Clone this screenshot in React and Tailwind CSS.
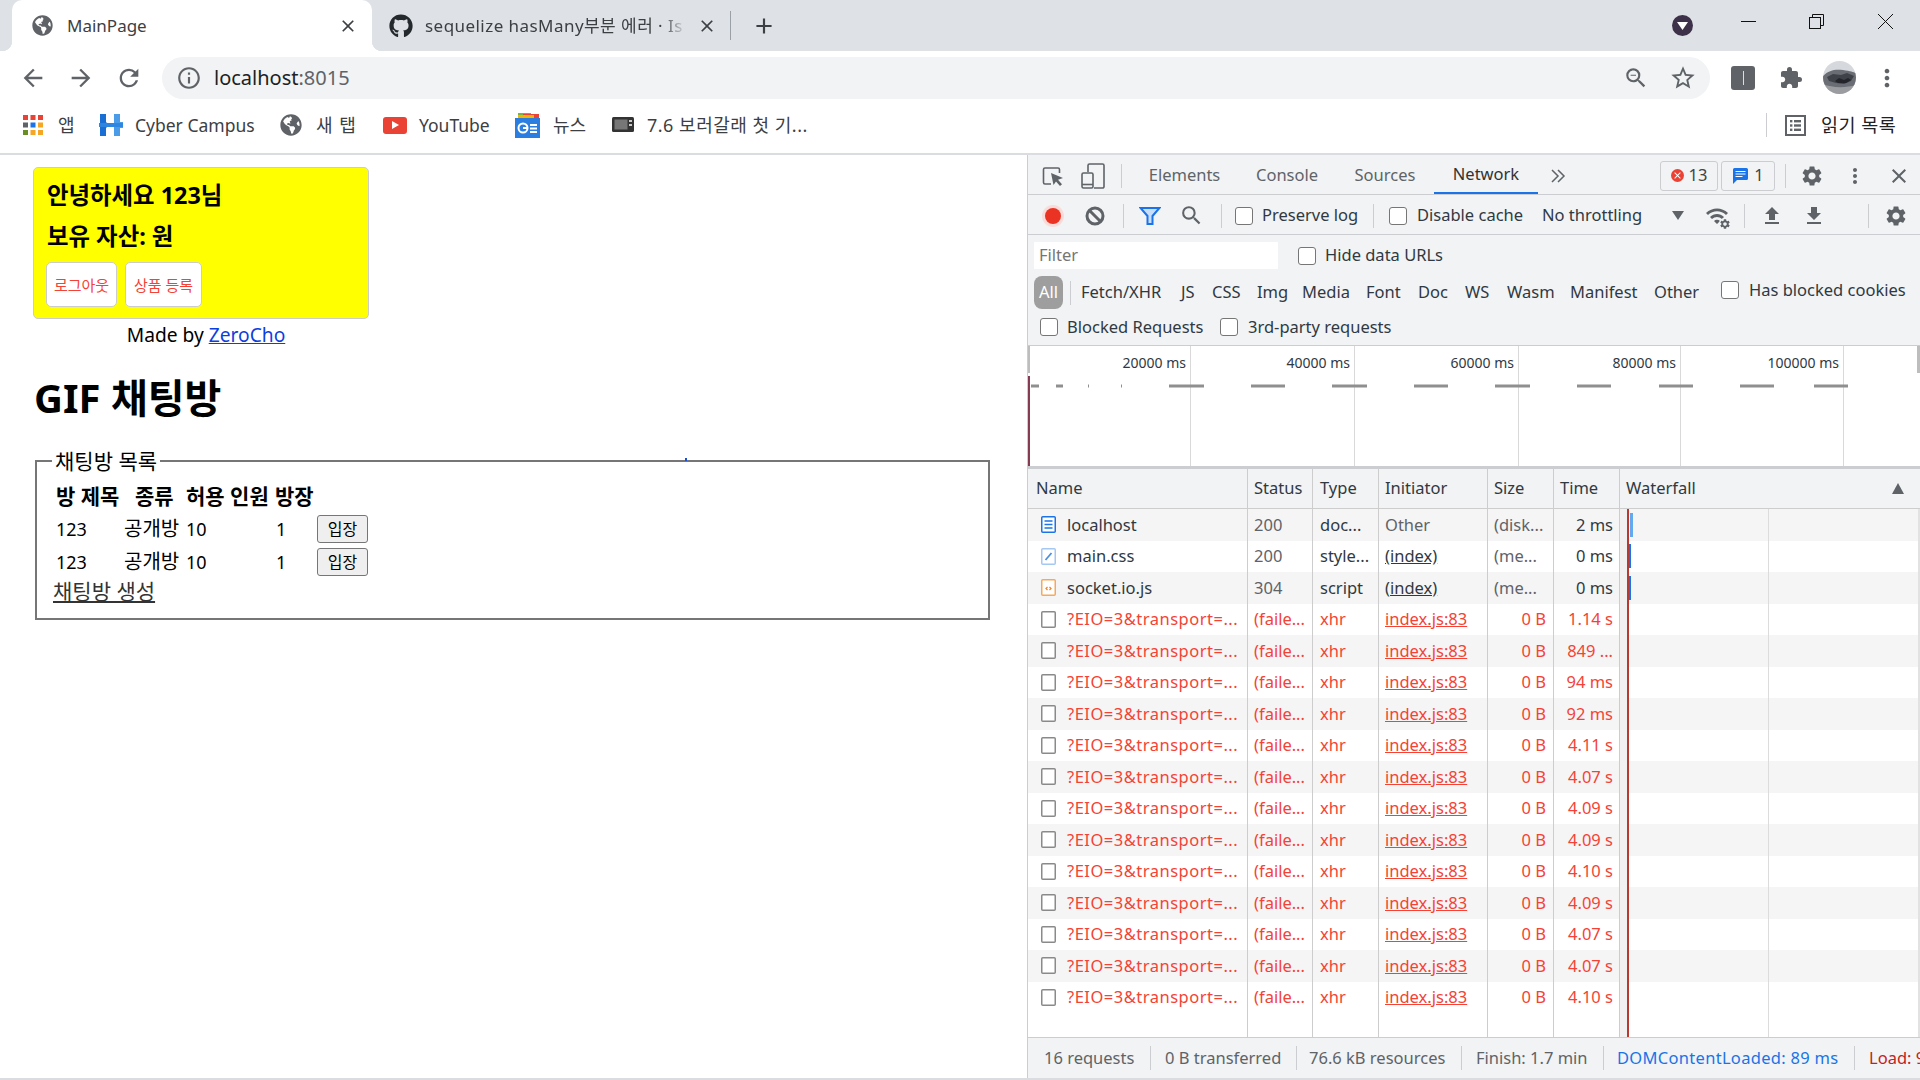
import {
  MdArrowBack, MdArrowForward, MdRefresh, MdInfoOutline, MdClose, MdAdd, MdMoreVert, MdExtension,
  MdZoomOut, MdStarBorder, MdSettings, MdSearch, MdFileUpload, MdFileDownload, MdWifi,
} from 'react-icons/md';
import { FaGithub, FaGlobeAmericas } from 'react-icons/fa';

const FONT = "font-['Noto_Sans','Noto_Sans_CJK_KR',sans-serif]";

const requests = [
  { name: 'localhost', status: '200', type: 'doc...', initiator: 'Other', size: '(disk...', time: '2 ms', icon: 'doc', bar: 'ml-[10px] bg-[#64a8ee]' },
  { name: 'main.css', status: '200', type: 'style...', initiator: '(index)', size: '(me...', time: '0 ms', icon: 'css', bar: 'ml-[8px] bg-[#1a73e8]' },
  { name: 'socket.io.js', status: '304', type: 'script', initiator: '(index)', size: '(me...', time: '0 ms', icon: 'js', bar: 'ml-[8px] bg-[#1a73e8]' },
];

const failedTimes = ['1.14 s', '849 ...', '94 ms', '92 ms', '4.11 s', '4.07 s', '4.09 s', '4.09 s', '4.10 s', '4.09 s', '4.07 s', '4.07 s', '4.10 s'];

const filterTypes = [
  ['Fetch/XHR', 'w-[84px]'], ['JS', 'w-[15px]'], ['CSS', 'w-[29px]'], ['Img', 'w-[29px]'], ['Media', 'w-[48px]'], ['Font', 'w-[36px]'],
  ['Doc', 'w-[31px]'], ['WS', 'w-[26px]'], ['Wasm', 'w-[47px]'], ['Manifest', 'w-[68px]'], ['Other', 'w-[45px]'],
];

const Checkbox = ({ className = '' }) => (
  <span className={`block w-[18px] h-[18px] shrink-0 bg-white border border-[#767676] rounded-[3px] ${className}`} />
);

const Divider = ({ className = '' }) => <span className={`block w-px h-[24px] shrink-0 bg-[#cbcdd1] ${className}`} />;

const AppsIcon = () => {
  const colors = ['#ea4335', '#ea4335', '#ea4335', '#5f6368', '#1a73e8', '#f5a623', '#6b8e23', '#f5a623', '#f5a623'];
  return (
    <svg width="20" height="20" viewBox="0 0 20 20">
      {colors.map((c, i) => (
        <rect key={i} x={(i % 3) * 7.5} y={Math.floor(i / 3) * 7.5} width="5" height="5" fill={c} />
      ))}
    </svg>
  );
};

const CampusIcon = () => (
  <svg width="24" height="24" viewBox="0 0 24 24">
    <path d="M1 1h6v8l3 3-3 3v8H1z" fill="#1a6fd4" />
    <path d="M15 1h6v8h3v6h-3v8h-6z" fill="#4a9be8" />
    <path d="M0 10h24v4H0z" fill="#2f86e0" />
  </svg>
);

const NewsIcon = () => (
  <svg width="25" height="25" viewBox="0 0 25 25">
    <rect x="3" y="0" width="13" height="6" fill="#7cb342" />
    <rect x="8" y="1" width="16" height="6" fill="#ea4335" />
    <rect x="3" y="2" width="16" height="4" fill="#f4b400" />
    <rect x="0" y="5" width="25" height="20" fill="#2a7de1" />
    <circle cx="8" cy="15" r="4.5" fill="none" stroke="#fff" strokeWidth="2" />
    <path d="M8 15h5M15 12h7M15 15.5h7M15 19h7" stroke="#fff" strokeWidth="1.8" />
  </svg>
);

const TvIcon = () => (
  <svg width="22" height="20" viewBox="0 0 22 20">
    <rect x="0" y="2" width="22" height="15" rx="1.5" fill="#333" />
    <rect x="2.5" y="4.5" width="13" height="10" fill="#777" />
    <rect x="17" y="5" width="3" height="2" fill="#ccc" />
    <rect x="17" y="9" width="3" height="2" fill="#ccc" />
  </svg>
);

const Avatar = () => (
  <svg width="33" height="33" viewBox="0 0 33 33">
    <clipPath id="avatar-clip"><circle cx="16.5" cy="16.5" r="16.5" /></clipPath>
    <g clipPath="url(#avatar-clip)">
      <rect width="33" height="33" fill="#d5d8dc" />
      <rect y="23" width="33" height="10" fill="#9a9ca0" />
      <path d="M0 15c6-6 12-7 20-6s10 2 13 3v12c-10 3-24 3-33-1z" fill="#6a6d73" />
      <path d="M4 16l6-3 8 1 6-2 7 3-3 5-7 3-8-1-7-2z" fill="#3f4249" />
      <path d="M12 20l4-3 5 2 4-2 3 2-5 3-8 0z" fill="#23252b" />
    </g>
  </svg>
);

const ReadingIcon = () => (
  <svg width="21" height="21" viewBox="0 0 21 21" fill="#5f6368">
    <path d="M0 0h21v21H0zM2 2v17h17V2z" fillRule="evenodd" />
    <rect x="5" y="5" width="2.4" height="2.4" /><rect x="9" y="5" width="7" height="2.4" />
    <rect x="5" y="9.3" width="2.4" height="2.4" /><rect x="9" y="9.3" width="7" height="2.4" />
    <rect x="5" y="13.6" width="2.4" height="2.4" /><rect x="9" y="13.6" width="7" height="2.4" />
  </svg>
);

const InspectIcon = () => (
  <svg width="24" height="24" viewBox="0 0 24 24" fill="none">
    <path d="M10 20H4a1.5 1.5 0 0 1-1.5-1.5v-13A1.5 1.5 0 0 1 4 4h13a1.5 1.5 0 0 1 1.5 1.5V9" stroke="#5f6368" strokeWidth="1.6" />
    <path d="M10 9l12 5-5 1.8 4 4.4-2 1.8-4-4.4L12.5 21z" fill="#5f6368" />
  </svg>
);

const DeviceIcon = () => (
  <svg width="24" height="26" viewBox="0 0 24 26" fill="none" stroke="#5f6368" strokeWidth="1.6">
    <path d="M7 9V2.5A1.5 1.5 0 0 1 8.5 1h13A1.5 1.5 0 0 1 23 2.5v21a1.5 1.5 0 0 1-1.5 1.5H13" />
    <rect x="1" y="10" width="11" height="15" rx="1.5" fill="#f1f3f4" />
    <path d="M1 21.5h11" />
  </svg>
);

const StopIcon = () => (
  <svg width="20" height="20" viewBox="0 0 20 20" fill="none" stroke="#5f6368" strokeWidth="3">
    <circle cx="10" cy="10" r="8" />
    <path d="M4.5 4.5l11 11" />
  </svg>
);

const FileIcon = ({ kind }) => {
  if (kind === 'doc') {
    return (
      <svg width="15" height="17" viewBox="0 0 15 17" fill="none" className="shrink-0">
        <rect x="0.75" y="0.75" width="13.5" height="15.5" rx="1" fill="#fff" stroke="#1a73e8" strokeWidth="1.5" />
        <path d="M3.5 5h8M3.5 8.5h8M3.5 12h8" stroke="#1a73e8" strokeWidth="1.3" />
      </svg>
    );
  }
  if (kind === 'css') {
    return (
      <svg width="15" height="17" viewBox="0 0 15 17" fill="none" className="shrink-0">
        <rect x="0.75" y="0.75" width="13.5" height="15.5" rx="1" fill="#fff" stroke="#a5c8f3" strokeWidth="1.5" />
        <path d="M4.5 12l6-7" stroke="#4a90e2" strokeWidth="1.8" />
      </svg>
    );
  }
  if (kind === 'js') {
    return (
      <svg width="15" height="17" viewBox="0 0 15 17" fill="none" className="shrink-0">
        <rect x="0.75" y="0.75" width="13.5" height="15.5" rx="1" fill="#fff" stroke="#f5a95c" strokeWidth="1.5" />
        <path d="M6.5 8L5 9.5 6.5 11M8.5 8L10 9.5 8.5 11" stroke="#e8862a" strokeWidth="1.2" />
      </svg>
    );
  }
  return (
    <svg width="15" height="17" viewBox="0 0 15 17" fill="none" className="shrink-0">
      <rect x="0.75" y="0.75" width="13.5" height="15.5" rx="1" fill="#fff" stroke="#8a8a8a" strokeWidth="1.5" />
    </svg>
  );
};

const RequestRow = ({ row, index }) => {
  const stripe = index % 2 === 0 ? 'bg-[#f5f5f5]' : 'bg-white';
  const failed = row.failed;
  const cell = 'h-full flex items-center border-r border-[#cdcdcd] shrink-0 whitespace-nowrap overflow-hidden';
  return (
    <div className={`flex h-[31.5px] text-[16.5px] ${stripe} ${failed ? 'text-[#f44336]' : 'text-[#303942]'}`}>
      <div className={`${cell} w-[220px] pl-[13px] gap-[11px]`}>
        <FileIcon kind={row.icon} />
        <span className={failed ? 'tracking-[0.5px]' : ''}>{row.name}</span>
      </div>
      <div className={`${cell} w-[65px] pl-[6px] ${failed ? '' : 'text-[#5f6368]'}`}>{row.status}</div>
      <div className={`${cell} w-[66px] pl-[7px]`}>{row.type}</div>
      <div className={`${cell} w-[109px] pl-[6px]`}>
        {row.initiator === 'Other' ? <span className="text-[#5f6368]">Other</span> : <span className="underline">{row.initiator}</span>}
      </div>
      <div className={`${cell} w-[66px] justify-end pr-[7px] ${failed ? '' : 'text-[#5f6368]'}`}>
        <span className={failed ? '' : 'mr-auto pl-[6px]'}>{row.size}</span>
      </div>
      <div className={`${cell} w-[66px] justify-end pr-[6px]`}>{row.time}</div>
      <div className="flex-1 h-full flex items-center">
        {row.bar && <span className={`block w-[3px] h-[24px] ${row.bar}`} />}
      </div>
    </div>
  );
};

const allRows = [
  ...requests,
  ...failedTimes.map((time) => ({
    name: '?EIO=3&transport=...', status: '(faile...', type: 'xhr', initiator: 'index.js:83', size: '0 B', time, icon: 'none', failed: true,
  })),
];

const overviewDashes = [
  [3, 8], [28, 7], [60, 1], [93, 1], [141, 35], [223, 34], [304, 35], [386, 34], [467, 35], [549, 34], [631, 34], [712, 34], [786, 34],
];

const Overview = () => (
  <div className="relative h-[124px] shrink-0 bg-white border-t border-b-[3px] border-t-[#cbcdd1] border-b-[#cbcdd1] flex text-[14px] text-[#303942] leading-none">
    {[
      ['20000 ms', 'w-[163px]'], ['40000 ms', 'w-[164px]'], ['60000 ms', 'w-[164px]'], ['80000 ms', 'w-[162px]'], ['100000 ms', 'w-[163px]'],
    ].map(([label, width]) => (
      <div key={label} className={`${width} h-full border-r border-[#d9d9d9] text-right pr-[4px] pt-[10px] whitespace-nowrap`}>{label}</div>
    ))}
    <svg className="absolute left-0 top-0" width="892" height="120">
      {overviewDashes.map(([x, w]) => (
        <rect key={x} x={x} y="38.5" width={w} height="3" fill="#8f8f8f" />
      ))}
      <rect x="0" y="0" width="2" height="27" fill="#bdbdbd" />
      <rect x="0" y="30" width="2" height="90" fill="#2a5f9e" />
      <rect x="0" y="30" width="0.6" height="90" fill="#c5221f" />
      <rect x="889" y="0" width="3" height="27" fill="#bdbdbd" />
    </svg>
  </div>
);

const DevTools = () => (
  <div className="w-[893px] shrink-0 flex flex-col bg-[#f1f3f4] border-l border-[#cbcdd1] text-[16.5px] text-[#303942] leading-none">
    <div className="h-[40px] pt-[2px] flex items-center border-b border-[#cbcdd1] shrink-0">
      <span className="ml-[13px] shrink-0"><InspectIcon /></span>
      <span className="ml-[16px] shrink-0"><DeviceIcon /></span>
      <Divider className="ml-[16px]" />
      <div className="ml-[9px] flex h-full text-[#5f6368] shrink-0">
        <span className="w-[107px] flex items-center justify-center">Elements</span>
        <span className="w-[98px] flex items-center justify-center">Console</span>
        <span className="w-[98px] flex items-center justify-center">Sources</span>
        <span className="w-[104px] flex items-center justify-center text-[#333] border-b-2 border-[#1a73e8]">Network</span>
      </div>
      <svg className="ml-[10px] shrink-0" width="20" height="20" viewBox="0 0 20 20" fill="none" stroke="#5f6368" strokeWidth="1.5">
        <path d="M4 4l6 6-6 6M10 4l6 6-6 6" />
      </svg>
      <span className="ml-[92px] w-[58px] h-[30px] shrink-0 flex items-center justify-center gap-[5px] border border-[#cbcdd1] rounded-[3px] text-[#444]">
        <span className="relative w-[13px] h-[13px] rounded-full bg-[#ea4335] flex items-center justify-center">
          <MdClose className="text-white" size={11} />
        </span>
        13
      </span>
      <span className="ml-[3px] w-[54px] h-[30px] shrink-0 flex items-center justify-center gap-[6px] border border-[#cbcdd1] rounded-[3px] text-[#444]">
        <svg width="16" height="16" viewBox="0 0 16 16">
          <path d="M1 1.5A1.5 1.5 0 0 1 2.5 0h12A1.5 1.5 0 0 1 16 1.5v9a1.5 1.5 0 0 1-1.5 1.5H5l-4 4z" fill="#1a73e8" />
          <path d="M3.5 3.5h10M3.5 6h10M3.5 8.5h7" stroke="#fff" strokeWidth="1" />
        </svg>
        1
      </span>
      <Divider className="ml-[10px]" />
      <MdSettings className="ml-[14px] text-[#5f6368] shrink-0" size={24} />
      <MdMoreVert className="ml-[19px] text-[#5f6368] shrink-0" size={24} />
      <MdClose className="ml-[20px] text-[#5f6368] shrink-0" size={24} />
    </div>

    <div className="h-[40px] pt-[2px] flex items-center border-b border-[#cbcdd1] shrink-0 whitespace-nowrap">
      <span className="ml-[14px] w-[22px] h-[22px] shrink-0 rounded-full bg-[#f9dcd9] flex items-center justify-center">
        <span className="block w-[16px] h-[16px] rounded-full bg-[#ea3323]" />
      </span>
      <span className="ml-[21px] shrink-0"><StopIcon /></span>
      <Divider className="ml-[18px]" />
      <svg className="ml-[15px] shrink-0" width="22" height="20" viewBox="0 0 22 20" fill="#c9defa" stroke="#1a73e8" strokeWidth="2">
        <path d="M1.5 2h19l-7 8v8h-5v-8z" />
      </svg>
      <MdSearch className="ml-[18px] text-[#5f6368] shrink-0" size={25} />
      <Divider className="ml-[17px]" />
      <Checkbox className="ml-[13px]" />
      <span className="ml-[9px] w-[97px] shrink-0">Preserve log</span>
      <Divider className="ml-[14px]" />
      <Checkbox className="ml-[15px]" />
      <span className="ml-[10px] w-[107px] shrink-0">Disable cache</span>
      <span className="ml-[18px] w-[102px] shrink-0">No throttling</span>
      <svg className="ml-[28px] shrink-0" width="12" height="9" viewBox="0 0 12 9"><path d="M0 0h12L6 9z" fill="#5f6368" /></svg>
      <span className="relative ml-[21px] w-[24px] h-[24px] shrink-0">
        <MdWifi className="text-[#5f6368]" size={24} />
        <MdSettings className="absolute -right-[2px] -bottom-[2px] text-[#5f6368] bg-[#f1f3f4] rounded-full" size={12} />
      </span>
      <Divider className="ml-[15px]" />
      <MdFileUpload className="ml-[15px] text-[#5f6368] shrink-0" size={24} />
      <MdFileDownload className="ml-[18px] text-[#5f6368] shrink-0" size={24} />
      <Divider className="ml-[42px]" />
      <MdSettings className="ml-[15px] text-[#5f6368] shrink-0" size={24} />
    </div>

    <div className="h-[39px] pt-[2px] flex items-center shrink-0 whitespace-nowrap">
      <span className="ml-[6px] w-[244px] h-[27px] shrink-0 bg-white pl-[5px] flex items-center text-[#757575]">Filter</span>
      <Checkbox className="ml-[20px]" />
      <span className="ml-[9px]">Hide data URLs</span>
    </div>
    <div className="h-[36px] pt-[1px] flex items-center shrink-0 whitespace-nowrap">
      <span className="ml-[6px] w-[29px] h-[33px] shrink-0 rounded-[8px] bg-[#9e9e9e] text-white flex items-center justify-center">All</span>
      <span className="block ml-[7px] mr-[10px] w-px h-[24px] shrink-0 bg-[#cbcdd1]" />
      <div className="flex gap-[16px] shrink-0">
        {filterTypes.map(([label, width]) => (
          <span key={label} className={`${width} shrink-0`}>{label}</span>
        ))}
      </div>
      <Checkbox className="ml-[22px] -mt-[5px]" />
      <span className="ml-[10px] -mt-[5px] shrink-0">Has blocked cookies</span>
    </div>
    <div className="h-[35px] flex items-center shrink-0 whitespace-nowrap pb-[1px]">
      <Checkbox className="ml-[12px]" />
      <span className="ml-[9px] w-[138px] shrink-0">Blocked Requests</span>
      <Checkbox className="ml-[15px]" />
      <span className="ml-[10px] shrink-0">3rd-party requests</span>
    </div>

    <Overview />

    <div className="relative flex-1 flex flex-col min-h-0">
      <div className="h-[40px] shrink-0 flex items-center border-b border-[#cdcdcd] bg-[#f1f3f4]">
        {[
          ['Name', 'w-[220px] pl-[8px]'], ['Status', 'w-[65px] pl-[6px]'], ['Type', 'w-[66px] pl-[7px]'],
          ['Initiator', 'w-[109px] pl-[6px]'], ['Size', 'w-[66px] pl-[6px]'], ['Time', 'w-[66px] pl-[6px]'],
        ].map(([label, cols]) => (
          <div key={label} className={`${cols} h-full flex items-center border-r border-[#cdcdcd] shrink-0`}>{label}</div>
        ))}
        <div className="flex-1 flex items-center justify-between pl-[6px] pr-[16px]">
          Waterfall
          <svg width="12" height="11" viewBox="0 0 12 11"><path d="M6 0l6 11H0z" fill="#5f6368" /></svg>
        </div>
      </div>
      <div className="flex-1 flex flex-col bg-white min-h-0">
        {allRows.map((row, i) => (
          <RequestRow key={i} row={row} index={i} />
        ))}
        <div className="flex-1 flex">
          {['w-[220px]', 'w-[65px]', 'w-[66px]', 'w-[109px]', 'w-[66px]', 'w-[66px]'].map((w, i) => (
            <div key={i} className={`${w} shrink-0 border-r border-[#cdcdcd]`} />
          ))}
        </div>
      </div>
      {/* waterfall markers */}
      <span className="absolute left-[592px] top-[40px] bottom-0 w-[7px] bg-[#f1f1f1]" />
      <span className="absolute left-[599px] top-[40px] bottom-0 w-[2px] bg-[#b8392f]" />
      <span className="absolute left-[740px] top-[40px] bottom-0 w-px bg-[#dcdcdc]" />
      <span className="absolute right-0 top-[40px] bottom-0 w-[2px] bg-[#e2e2e2]" />
    </div>

    <div className="h-[41px] shrink-0 flex items-center border-t border-[#cbcdd1] text-[#5f6368] overflow-hidden whitespace-nowrap">
      <span className="ml-[16px] w-[91px] shrink-0">16 requests</span>
      <Divider className="ml-[15px]" />
      <span className="ml-[14px] w-[116px] shrink-0">0 B transferred</span>
      <Divider className="ml-[15px]" />
      <span className="ml-[12px] w-[138px] shrink-0">76.6 kB resources</span>
      <Divider className="ml-[14px]" />
      <span className="ml-[14px] w-[112px] shrink-0">Finish: 1.7 min</span>
      <Divider className="ml-[15px]" />
      <span className="ml-[13px] w-[221px] shrink-0 text-[#1a73e8] tracking-[0.3px]">DOMContentLoaded: 89 ms</span>
      <Divider className="ml-[16px]" />
      <span className="ml-[14px] shrink-0 text-[#c5221f]">Load: 9</span>
    </div>
  </div>
);

const TabStrip = () => (
  <div className="h-[51px] bg-[#dee1e6] flex items-center shrink-0 text-[17px] text-[#3c4043]">
    <div className="relative ml-[12px] w-[360px] h-full shrink-0 bg-white rounded-t-[10px] flex items-center">
      <span className="absolute -left-[10px] bottom-0 w-[10px] h-[10px] bg-[radial-gradient(circle_at_0_0,#dee1e6_10px,#fff_10.5px)]" />
      <span className="absolute -right-[10px] bottom-0 w-[10px] h-[10px] bg-[radial-gradient(circle_at_100%_0,#dee1e6_10px,#fff_10.5px)]" />
      <FaGlobeAmericas className="ml-[20px] text-[#5f6368]" size={21} />
      <span className="ml-[14px]">MainPage</span>
      <MdClose className="ml-auto mr-[14px] text-[#3c4043]" size={20} />
    </div>
    <FaGithub className="ml-[17px] text-[#24292e] shrink-0" size={24} />
    <span className="ml-[12px] w-[262px] shrink-0 whitespace-nowrap tracking-[0.45px] [mask-image:linear-gradient(to_right,#000_90%,transparent)]">
      sequelize hasMany부분 에러 · Is
    </span>
    <MdClose className="ml-[10px] text-[#3c4043] shrink-0" size={20} />
    <span className="block ml-[13px] w-px h-[29px] shrink-0 bg-[#9aa0a6]" />
    <MdAdd className="ml-[20px] text-[#3c4043] shrink-0" size={26} />
    <span className="ml-auto w-[21px] h-[21px] shrink-0 rounded-full bg-[#3c3148] flex items-center justify-center">
      <svg width="11" height="8" viewBox="0 0 11 8"><path d="M0 0h11L5.5 8z" fill="#fff" /></svg>
    </span>
    <svg className="ml-[48px] -mt-[8px] shrink-0" width="15" height="15" viewBox="0 0 15 15" stroke="#111" fill="none"><path d="M0 7.5h15" /></svg>
    <svg className="ml-[53px] -mt-[8px] shrink-0" width="15" height="15" viewBox="0 0 15 15" stroke="#111" fill="none">
      <rect x="0.5" y="3.5" width="11" height="11" /><path d="M3.5 3.5v-3h11v11h-3" />
    </svg>
    <svg className="ml-[54px] mr-[27px] -mt-[8px] shrink-0" width="15" height="15" viewBox="0 0 15 15" stroke="#111" fill="none"><path d="M0 0l15 15M15 0L0 15" /></svg>
  </div>
);

const AddressBar = () => (
  <div className="h-[55px] bg-white shrink-0 text-[#5f6368]">
    <div className="h-[42px] mt-[6px] flex items-center w-full">
      <MdArrowBack className="ml-[19px] shrink-0" size={28} />
      <MdArrowForward className="ml-[20px] shrink-0" size={28} />
      <MdRefresh className="ml-[20px] shrink-0" size={28} />
      <div className="ml-[19px] w-[1548px] h-full shrink-0 rounded-full bg-[#f1f3f4] flex items-center">
        <MdInfoOutline className="ml-[14px]" size={26} />
        <span className="ml-[12px] text-[20px] text-[#202124]">localhost<span className="text-[#5f6368]">:8015</span></span>
        <MdZoomOut className="ml-auto" size={26} />
        <MdStarBorder className="ml-[20px] mr-[13px]" size={28} />
      </div>
      <span className="ml-[21px] w-[24px] h-[24px] shrink-0 rounded-[3px] bg-[#5f6368] flex items-center justify-center">
        <span className="block w-px h-[14px] bg-[#f5d5c5]" />
      </span>
      <MdExtension className="ml-[24px] shrink-0" size={24} />
      <span className="ml-[20px] -mt-[1px] shrink-0"><Avatar /></span>
      <MdMoreVert className="ml-[17px] shrink-0" size={28} />
    </div>
  </div>
);

const BookmarkBar = () => (
  <div className="h-[47px] bg-white flex items-center pb-[9px] shrink-0 text-[17.5px] text-[#3c4043] whitespace-nowrap">
    <span className="ml-[23px] shrink-0"><AppsIcon /></span>
    <span className="ml-[15px] w-[15px] shrink-0 text-[18px]">앱</span>
    <span className="ml-[26px] shrink-0"><CampusIcon /></span>
    <span className="ml-[12px] w-[119px] shrink-0">Cyber Campus</span>
    <FaGlobeAmericas className="ml-[26px] text-[#5f6368] shrink-0" size={22} />
    <span className="ml-[14px] w-[40px] shrink-0 text-[18px] tracking-[1px]">새 탭</span>
    <span className="ml-[27px] w-[24px] h-[17px] shrink-0 rounded-[3px] bg-[#ea4335] flex items-center justify-center">
      <svg width="7" height="8" viewBox="0 0 7 8"><path d="M0 0l7 4-7 4z" fill="#fff" /></svg>
    </span>
    <span className="ml-[12px] w-[71px] shrink-0">YouTube</span>
    <span className="ml-[25px] shrink-0"><NewsIcon /></span>
    <span className="ml-[13px] w-[34px] shrink-0 text-[18px]">뉴스</span>
    <span className="ml-[25px] shrink-0"><TvIcon /></span>
    <span className="ml-[13px] w-[163px] shrink-0 text-[18px] tracking-[0.5px]">7.6 보러갈래 첫 기...</span>
    <span className="block ml-auto w-px h-[24px] shrink-0 bg-[#cbcdd1]" />
    <span className="ml-[18px] shrink-0"><ReadingIcon /></span>
    <span className="ml-[15px] mr-[23px] w-[76px] shrink-0 text-[18.5px] tracking-[0.5px] text-[#202124]">읽기 목록</span>
  </div>
);

const MainPage = () => (
  <div className="w-[1027px] shrink-0 bg-white text-[20px] text-black leading-[28px]">
    <div className="ml-[33px] mt-[12px] w-[336px] h-[152px] bg-[#ffff00] border border-[#cccccc] rounded-[5px] pl-[12px] font-bold flex flex-col">
      <div className="mt-[13px] pl-[1px] text-[23.4px]">안녕하세요 123님</div>
      <div className="mt-[13px] pl-[1px] text-[23.4px]">보유 자산: 원</div>
      <div className="mt-[12px] flex gap-[8px] font-normal text-[15px] text-[#f44336]">
        <span className="w-[71px] h-[45px] flex items-center justify-center bg-white border border-[#cccccc] rounded-[5px]">로그아웃</span>
        <span className="w-[77px] h-[45px] flex items-center justify-center bg-white border border-[#cccccc] rounded-[5px]">상품 등록</span>
      </div>
    </div>
    <div className="ml-[33px] mt-[2px] w-[346px] text-center text-[19.2px]">
      Made by <span className="text-[#0b3fe0] underline">ZeroCho</span>
    </div>
    <h1 className="ml-[34px] mt-[21px] text-[40px] leading-[56px] font-bold">GIF 채팅방</h1>
    <fieldset className="relative ml-[35px] mt-[21px] w-[955px] border-2 border-[#767676] pl-[19px] pb-[15px]">
      <legend className="-ml-[4px] px-[3px] text-[21px]">채팅방 목록</legend>
      <span className="absolute left-[648px] -top-[17px] w-[2px] h-[3px] bg-[#1a4fd0]" />
      <table className="mt-[4px] border-collapse text-left">
        <thead>
          <tr className="h-[33px] text-[21px]">
            <th className="w-[68px] p-0 font-bold">방 제목</th>
            <th className="w-[62px] p-0 pl-[11px] font-bold">종류</th>
            <th className="w-[89px] p-0 font-bold">허용 인원</th>
            <th className="w-[42px] p-0 font-bold">방장</th>
            <th className="w-[51px] p-0" />
          </tr>
        </thead>
        <tbody>
          {[0, 1].map((i) => (
            <tr key={i} className="h-[33px]">
              <td className="p-0 text-[18px]">123</td>
              <td className="p-0">공개방</td>
              <td className="p-0 text-[18px]">10</td>
              <td className="p-0 pl-[1px] text-[18px]">1</td>
              <td className="p-0">
                <span className="w-[51px] h-[28px] flex items-center justify-center bg-[#efefef] border border-[#767676] rounded-[3px] text-[16px]">입장</span>
              </td>
            </tr>
          ))}
        </tbody>
      </table>
      <div className="-ml-[3px] mt-[1px] leading-[24px] text-[21px]"><span className="underline text-[#333]">채팅방 생성</span></div>
    </fieldset>
  </div>
);

export default function App() {
  return (
    <div className={`w-[1920px] h-[1080px] overflow-hidden flex flex-col bg-white ${FONT}`}>
      <TabStrip />
      <AddressBar />
      <BookmarkBar />
      <div className="h-[2px] bg-[#dadce0] shrink-0" />
      <div className="flex flex-1 min-h-0">
        <MainPage />
        <DevTools />
      </div>
      <div className="h-[2px] bg-[#dadce0] shrink-0" />
    </div>
  );
}
